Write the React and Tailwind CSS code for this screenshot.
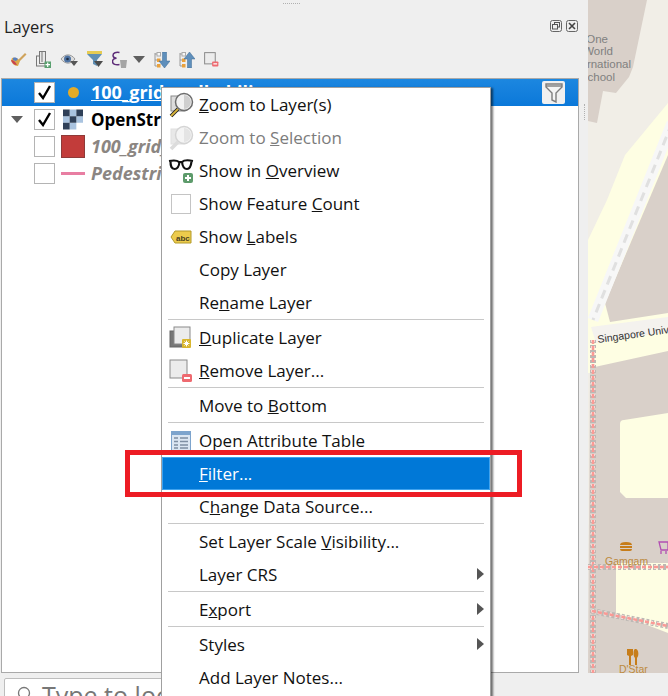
import React from "react";

const FONT = { fontFamily: '"Open Sans", "Noto Sans", sans-serif' };

function Caret({ className = "" }) {
  return <svg width="12" height="7" viewBox="0 0 12 7" className={className}><path d="M0 0h12L6 7z" fill="#5f5f5f" /></svg>;
}

function Magnifier({ dim }) {
  return (
    <svg width="26" height="26" viewBox="0 0 26 26">
      <rect x="3" y="4" width="14" height="15" fill={dim ? "#e8e8e8" : "#dcdcdc"} stroke={dim ? "#e0e0e0" : "#8a8a8a"} />
      <path d="M10 17L3 24" stroke={dim ? "#dcdcdc" : "#222"} strokeWidth="3.800" />
      {!dim && <path d="M10 17L3 24" stroke="#d9b43a" strokeWidth="1.800" />}
      <circle cx="16" cy="10" r="8.500" fill={dim ? "#f4f4f4" : "#f2f2f2"} stroke={dim ? "#d4d4d4" : "#6d6d6d"} strokeWidth="1.500" />
      <path d="M16 3a7 7 0 0 1 0 14z" fill={dim ? "#e4e4e4" : "#cfcfcf"} />
    </svg>
  );
}

function Glasses() {
  return (
    <svg width="26" height="26" viewBox="0 0 26 26">
      <path d="M1 3c5-1 8-1 10 1h3c2-2 6-2 11-1" fill="none" stroke="#111" strokeWidth="2" />
      <path d="M2.500 3.500c0 5 1 7.500 4 7.500s4.500-2.500 5-7M14 4c.5 4.500 2 7 5 7s4-2.500 4.500-7.500" fill="none" stroke="#111" strokeWidth="2.200" />
      <rect x="15" y="15" width="10" height="10" rx="2" fill="#5d9b6b" />
      <path d="M20 17v6M17 20h6" stroke="#fff" strokeWidth="2" />
    </svg>
  );
}

function EmptyBox() {
  return <span className="block w-[20px] h-[20px] border border-[#c4c4c4] bg-white" />;
}

function AbcTag() {
  return (
    <svg width="22" height="14" viewBox="0 0 22 14">
      <path d="M5 1h16v12H5L1 7z" fill="#eccb4c" stroke="#b39a2a" />
      <text x="6" y="10.500" fontSize="8" fontWeight="700" fill="#4a4120" fontFamily="Liberation Sans, sans-serif">abc</text>
    </svg>
  );
}

function Duplicate() {
  return (
    <svg width="24" height="24" viewBox="0 0 24 24">
      <rect x="1" y="5" width="16" height="16" fill="#777" stroke="#666" />
      <rect x="5" y="1" width="16" height="17" fill="#ececec" stroke="#8a8a8a" />
      <rect x="13" y="13" width="9" height="9" rx="1" fill="#d8b62e" />
      <path d="M17.500 14.500v6M14.500 17.500h6M15.500 15.500l4 4M19.500 15.500l-4 4" stroke="#fff" strokeWidth="1" />
    </svg>
  );
}

function Remove({ size = 24 }) {
  return (
    <svg width={size} height={size} viewBox="0 0 24 24">
      <rect x="1" y="1" width="17" height="18" fill="#ececec" stroke="#8a8a8a" strokeWidth={size < 20 ? 1.600 : 1} />
      <rect x="13" y="15" width="10" height="8" rx="1.500" fill="#ee6a70" />
      <rect x="15" y="18" width="6" height="2" fill="#fff" />
    </svg>
  );
}

function TableIcon() {
  return (
    <svg width="20" height="20" viewBox="0 0 20 20">
      <rect x=".5" y=".5" width="19" height="19" fill="#dbe6f2" stroke="#7da4cd" />
      <rect x="1" y="1" width="18" height="3" fill="#7da4cd" />
      <path d="M3 7h4M9 7h8M3 10.500h4M9 10.500h8M3 14h4M9 14h8M3 17h4M9 17h8" stroke="#7f8fa3" strokeWidth="1.300" />
    </svg>
  );
}

function Row({ icon, children, dim, active, arrow }) {
  return (
    <div className={`relative flex h-[33px] items-center ${active ? "bg-[#0078d7] outline outline-1 -outline-offset-1 outline-[#3fa2ee] text-white" : dim ? "text-[#7c7c7c]" : "text-[#111]"}`}>
      <span className="flex w-[37px] shrink-0 items-center justify-center pl-[1px]">{icon}</span>
      <span className="whitespace-nowrap text-[17px]">{children}</span>
      {arrow && (
        <svg width="7" height="12" viewBox="0 0 7 12" className="absolute right-[6px] top-[10px]"><path d="M0 0l7 6-7 6z" fill="#555" /></svg>
      )}
    </div>
  );
}

function Sep() {
  return <div className="mx-[6px] h-[2px] border-t border-[#c8c8c8]" />;
}

function ContextMenu() {
  return (
    <div className="absolute left-[161px] top-[87px] h-[620px] w-[330px] border border-[#a0a0a0] bg-white shadow-[2px_1px_2px_rgba(0,0,0,0.55)]">
      <Row icon={<Magnifier />}><u>Z</u>oom to Layer(s)</Row>
      <Row icon={<Magnifier dim />} dim>Zoom to <u>S</u>election</Row>
      <Row icon={<Glasses />}>Show in <u>O</u>verview</Row>
      <Row icon={<EmptyBox />}>Show Feature <u>C</u>ount</Row>
      <Row icon={<AbcTag />}>Show <u>L</u>abels</Row>
      <Row>Copy Layer</Row>
      <Row>Re<u>n</u>ame Layer</Row>
      <Sep />
      <Row icon={<Duplicate />}><u>D</u>uplicate Layer</Row>
      <Row icon={<Remove />}><u>R</u>emove Layer...</Row>
      <Sep />
      <Row>Move to <u>B</u>ottom</Row>
      <Sep />
      <Row icon={<TableIcon />}>Open Attribute Table</Row>
      <Row active><u>F</u>ilter...</Row>
      <Row>C<u>h</u>ange Data Source...</Row>
      <Sep />
      <Row>Set Layer Scale <u>V</u>isibility...</Row>
      <Row arrow>Layer CRS</Row>
      <Sep />
      <Row arrow>E<u>x</u>port</Row>
      <Sep />
      <Row arrow>Styles</Row>
      <Row>Add Layer Notes...</Row>
    </div>
  );
}

function Check({ checked }) {
  return (
    <span className="flex h-[21px] w-[21px] shrink-0 items-center justify-center border border-[#b4b4b4] bg-white">
      {checked && (
        <svg width="15" height="15" viewBox="0 0 15 15"><path d="M2 8l4 5 7-12" fill="none" stroke="#000" strokeWidth="2.400" /></svg>
      )}
    </span>
  );
}

function Raster() {
  return (
    <svg width="20" height="21" viewBox="0 0 21 21">
      <rect width="21" height="21" fill="#fff" />
      <path d="M7 0h7v7H7zM0 7h7v7H0zM14 7h7v7h-7zM7 14h7v7H7z" fill="#a9c3df" />
      <path d="M0 0h7v7H0zM14 0h7v7h-7zM7 7h7v7H7zM0 14h7v7H0z" fill="#2f4058" />
    </svg>
  );
}

function TreeRow({ selected, caret, checked, symbol, label, kind }) {
  const text =
    kind === "sel"
      ? "text-white underline font-bold text-[18px]"
      : kind === "raster"
      ? "text-black font-bold text-[17px]"
      : "text-[#8b8682] italic font-bold text-[18px]";
  return (
    <div className={`relative flex h-[27px] items-center ${selected ? "bg-gradient-to-b from-[#1c87e0] to-[#0a78d9]" : ""}`}>
      <span className="flex w-[32px] shrink-0 items-center justify-start pl-[9px]">{caret && <Caret />}</span>
      <Check checked={checked} />
      <span className="flex w-[36px] shrink-0 items-center justify-center">{symbol}</span>
      <span className={`whitespace-nowrap ${text}`}>{label}</span>
      {selected && (
        <span className="absolute right-[13px] top-[2px] flex h-[23px] w-[23px] items-center justify-center rounded-[2px] bg-[#f0f0f0]">
          <svg width="18" height="20" viewBox="0 0 18 20"><path d="M1 1h16v3l-6 6v9l-4-2v-7L1 4z" fill="#f4f4f4" stroke="#7d7d7d" strokeWidth="1.400" /><path d="M1 3h16" stroke="#7d7d7d" strokeWidth="1.400" /></svg>
        </span>
      )}
    </div>
  );
}

function Toolbar() {
  return (
    <div className="flex h-[37px] items-center pl-[10px]">
      <svg width="17" height="15" viewBox="0 0 17 15" className="mr-[9px]">
        <path d="M8 8l7-7 1.500 1.500-7 7z" fill="#cfa35c" />
        <path d="M2 6c3-1 6 0 8 3l-2 5C5 14 2 12 1 9z" fill="#dba94a" />
        <path d="M1 8c2 0 4 1 6 5-3 0-5-2-6-5z" fill="#c9414f" />
        <path d="M3 6c2-1 4 0 5 1l-2 2-3-1z" fill="#5a7fbd" />
      </svg>
      <svg width="15" height="17" viewBox="0 0 15 17" className="mr-[9px]">
        <rect x=".5" y="5" width="9" height="10" fill="#efefef" stroke="#777" />
        <rect x="3.500" y=".5" width="6" height="12" fill="#e8e8e8" stroke="#777" />
        <path d="M6 1v10" stroke="#777" />
        <rect x="8.500" y="10.500" width="6.500" height="6.500" fill="#5aa06f" />
        <path d="M11.700 11.500v4.500M9.500 13.700h4.500" stroke="#fff" strokeWidth="1.200" />
      </svg>
      <svg width="18" height="12" viewBox="0 0 18 12" className="mr-[8px]">
        <path d="M1 5c4-5.500 10-5.500 14 0-4 5.500-10 5.500-14 0z" fill="#dcdcdc" stroke="#9a9a9a" />
        <circle cx="7.500" cy="5" r="3.500" fill="#4f73a2" />
        <circle cx="7.500" cy="5" r="1.300" fill="#1d2c42" />
        <path d="M10 7h8l-4 5z" fill="#555" />
      </svg>
      <svg width="18" height="17" viewBox="0 0 18 17" className="mr-[8px]">
        <path d="M1 1h15v2l-5 6v6l-4-2V9L1 3z" fill="#5f8fb4" />
        <path d="M1 0h15v3H1z" fill="#e6cb52" />
        <path d="M8 10h9l-4.500 6z" fill="#4c4c4c" />
      </svg>
      <svg width="16" height="17" viewBox="0 0 16 17" className="mr-[5px]">
        <path d="M7.500 1.500C4 1 1 1.500 1 4.500c0 1.700 1.500 2.500 3.500 2.700C2 7.500.5 8.500.5 10.500c0 3 3.500 3.700 7 3" fill="none" stroke="#5e2d79" strokeWidth="1.500" />
        <path d="M8 9h7l-1 8H9z" fill="#a5a5a5" />
      </svg>
      <Caret className="mr-[9px]" />
      <svg width="16" height="16" viewBox="0 0 16 16" className="mr-[9px]">
        <path d="M1 1v13M1 2h5M1 8h5M1 14h5" stroke="#9a9a9a" fill="none" />
        <rect x="3" y="6.500" width="3.500" height="3.500" fill="#e9a13c" /><rect x="3" y="12" width="3.500" height="3.500" fill="#e9a13c" /><rect x="3" y=".5" width="3.500" height="3.500" fill="#f6f6f6" stroke="#aaa" />
        <path d="M8.500 0h4v9H16l-5.500 7L5 9h3.500z" fill="#5f8fbb" stroke="#3f6a94" strokeWidth=".5" />
      </svg>
      <svg width="16" height="16" viewBox="0 0 16 16" className="mr-[9px]">
        <path d="M1 1v13M1 2h5M1 8h5M1 14h5" stroke="#9a9a9a" fill="none" />
        <rect x="3" y="6.500" width="3.500" height="3.500" fill="#e9a13c" /><rect x="3" y="12" width="3.500" height="3.500" fill="#e9a13c" /><rect x="3" y=".5" width="3.500" height="3.500" fill="#f6f6f6" stroke="#aaa" />
        <path d="M8.500 16h4V7H16L10.500 0 5 7h3.500z" fill="#5f8fbb" stroke="#3f6a94" strokeWidth=".5" />
      </svg>
      <Remove size={15} />
    </div>
  );
}

function MapView() {
  const dash = (d) => (
    <g fill="none">
      <path d={d} stroke="#bdb8b4" strokeWidth="6" strokeDasharray="3 2" />
      <path d={d} stroke="#fbe9e6" strokeWidth="4" strokeDasharray="2 4" />
      <path d={d} stroke="#fa9a95" strokeWidth="2.500" strokeDasharray="4 2" />
    </g>
  );
  return (
    <svg width="80" height="673" viewBox="588 0 80 673" className="block shrink-0">
      <rect x="588" width="80" height="673" fill="#f1eee7" />
      <path d="M588 0h59l-14 67-4 10-13 16-13-2-6 32-9-2z" fill="#d9d0c9" />
      <g fontSize="11.500" fontFamily="Liberation Sans, sans-serif" fill="#808080" textAnchor="end">
        <text x="608" y="43">One</text>
        <text x="613" y="55">World</text>
        <text x="631" y="68">International</text>
        <text x="615" y="81">School</text>
      </g>
      <path d="M668 103l-43 52-18 45-19 40v133h80V103z" fill="#fefee3" />
      <path d="M668 155v158l-58 9-5-19z" fill="#d9d0c9" />
      <path d="M672 123L593 320" fill="none" stroke="#f7f7f7" strokeWidth="11" />
      <path d="M672 123L593 320" fill="none" stroke="#e0e0e0" strokeWidth="3" strokeDasharray="9 6" />
      <path d="M590 368l78-17v322h-80z" fill="#d9d0c9" />
      <path d="M596 343l72-11v-15l-70 9-7 1z" fill="#f4f2ee" />
      <path d="M620 424q0-4 4-4l44-7v85l-42 0-6-6z" fill="#fefee3" />
      <path d="M616 563h52v70l-52-20z" fill="#fefee3" />
      {dash("M593 340V673")}
      {dash("M588 567H668")}
      {dash("M592 611L668 626")}
      <text x="598" y="343" transform="rotate(-8 598 343)" fontSize="10.500" fontFamily="Liberation Sans, sans-serif" fill="#333">Singapore University</text>
      <path d="M620 545q0-3 6-3t6 3zM620 546h12v2h-12zM620 549h12q0 2-2 2h-8q-2 0-2-2z" fill="#c77d1a" />
      <path d="M659 542h9v8h-7zM661 551v3M666 551v3" stroke="#b34fb3" strokeWidth="1.300" fill="none" />
      <text x="605" y="565" fontSize="10.500" fontFamily="Liberation Sans, sans-serif" fill="#bd8a3e">Gamgam</text>
      <path d="M627 649v6l2 1v9h2v-9l2-1v-6M635 649c-2 1-2 7 0 9v7h2v-7c2-2 2-8-1-9z" fill="#c77d1a" />
      <text x="619" y="673" fontSize="10.500" fontFamily="Liberation Sans, sans-serif" fill="#bd8a3e">D'Star</text>
    </svg>
  );
}

export default function App() {
  return (
    <div style={FONT} className="relative h-[696px] w-[668px] overflow-hidden bg-[#efefef]">
      <div className="flex h-[673px]">
        <div className="relative flex w-[588px] shrink-0 flex-col">
          <div className="flex h-[41px] gap-[4px] pl-[4px] pr-[10px] pt-[12px]">
            <span className="flex-1 text-[16.500px] leading-[30px] text-[#222]">Layers</span>
            <svg width="12" height="12" viewBox="0 0 12 12" className="mt-[8px]"><rect x=".5" y=".5" width="11" height="11" rx="2" fill="none" stroke="#666" /><rect x="4.500" y="2.500" width="5" height="4.500" fill="none" stroke="#555" /><rect x="2.500" y="4.500" width="5" height="4.500" fill="#efefef" stroke="#555" /></svg>
            <svg width="12" height="12" viewBox="0 0 12 12" className="mt-[8px]"><rect x=".5" y=".5" width="11" height="11" rx="2" fill="none" stroke="#666" /><path d="M3 3l6 6M9 3l-6 6" stroke="#444" strokeWidth="1.600" /></svg>
          </div>
          <Toolbar />
          <div className="ml-[1px] mr-[9px] flex-1 border border-[#a9a9a9] bg-white">
            <TreeRow selected checked kind="sel" label="100_grid_walkability" symbol={<span className="block h-[11px] w-[11px] rounded-full bg-[#e3ab28]" />} />
            <TreeRow caret checked kind="raster" label="OpenStreetMap" symbol={<Raster />} />
            <TreeRow kind="vec" label="100_grid_pedestrian" symbol={<span className="block h-[23px] w-[24px] border border-[#8f3a38] bg-[#c23c3a]" />} />
            <TreeRow kind="vec" label="Pedestrian Links" symbol={<span className="block h-[3px] w-[24px] bg-[#e87ea2]" />} />
          </div>
          <span className="absolute right-[3px] top-[104px] h-[16px] border-l border-dotted border-[#b0b0b0]" />
          <span className="absolute left-[283px] top-[3px] w-[17px] border-t border-dotted border-[#b0b0b0]" />
        </div>
        <MapView />
      </div>
      <div className="ml-[4px] mt-[5px] flex h-[30px] w-[300px] items-start gap-[9px] rounded-[2px] border border-[#bdbdbd] bg-white pl-[12px]">
        <svg width="16" height="16" viewBox="0 0 16 16" className="mt-[7px]"><circle cx="7" cy="7" r="5.500" fill="none" stroke="#777" strokeWidth="1.300" /></svg>
        <span className="text-[25px] leading-[32px] text-[#777]">Type to locate</span>
      </div>
      <ContextMenu />
      <div className="absolute left-[125px] top-[450px] h-[47px] w-[397px] border-[5px] border-[#ed1c24]" />
    </div>
  );
}
